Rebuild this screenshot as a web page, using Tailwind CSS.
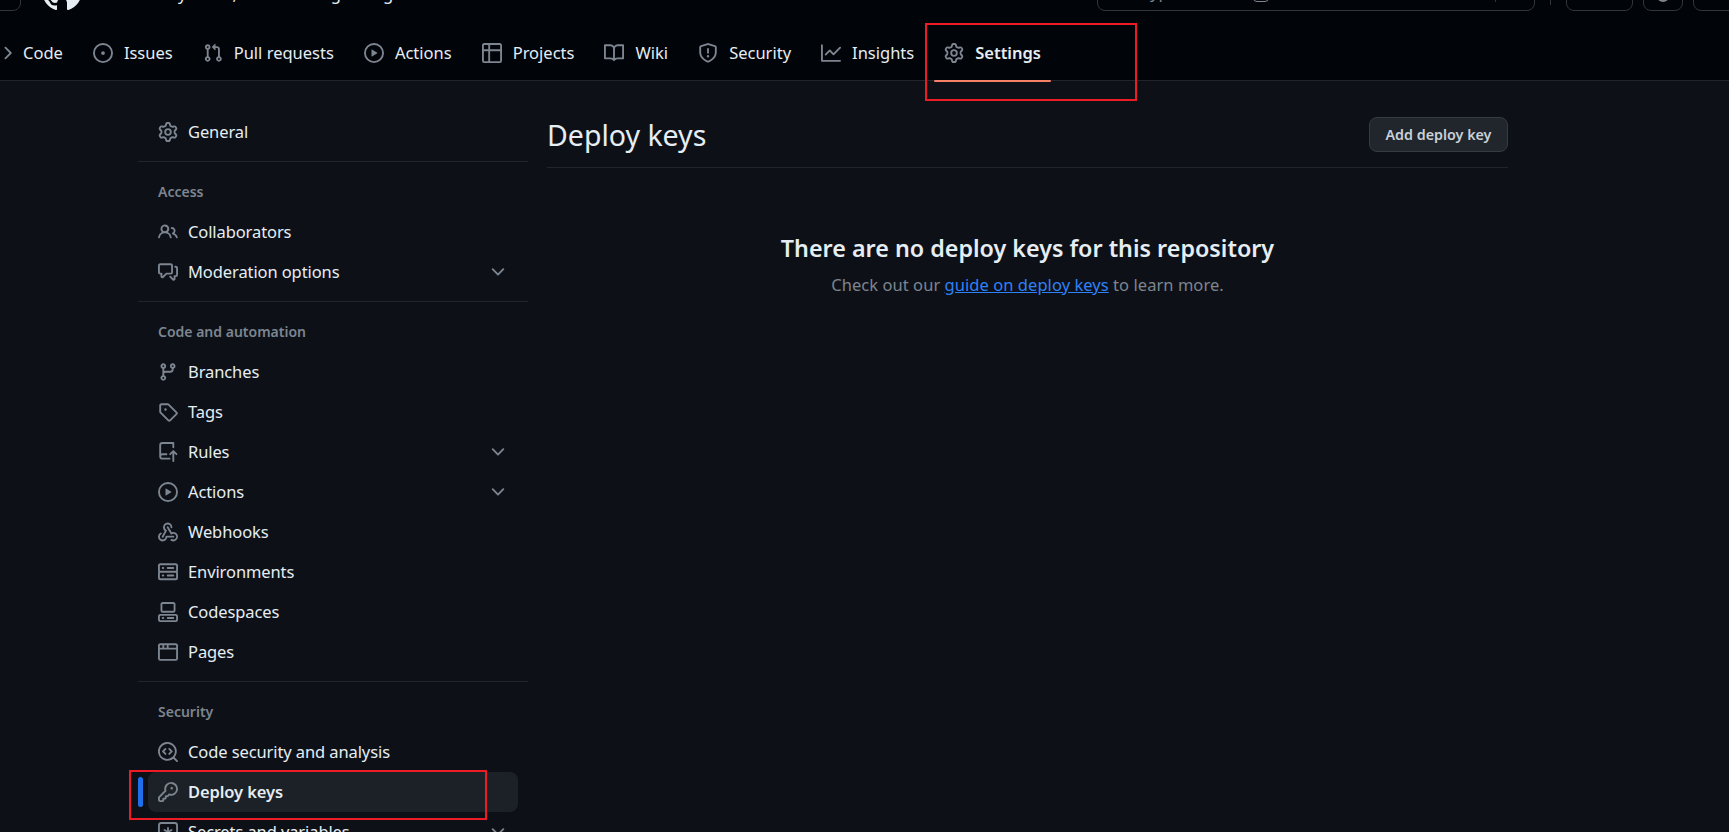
<!doctype html>
<html lang="en">
<head>
<meta charset="utf-8">
<title>Deploy keys</title>
<script src="https://cdn.jsdelivr.net/npm/@tailwindcss/browser@4"></script>
</head>
<body class="h-[832px] overflow-hidden bg-[#0d1117] font-['Noto_Sans',sans-serif] text-[16.5px] text-[#e6edf3]">

<!-- octicons -->
<svg class="hidden">
  <symbol id="i-mark" viewBox="0 0 16 16"><path d="M8 0c4.42 0 8 3.58 8 8a8.013 8.013 0 0 1-5.45 7.59c-.4.08-.55-.17-.55-.38 0-.27.01-1.13.01-2.2 0-.75-.25-1.23-.54-1.48 1.78-.2 3.65-.88 3.65-3.95 0-.88-.31-1.59-.82-2.15.08-.2.36-1.02-.08-2.12 0 0-.67-.22-2.2.82-.64-.18-1.32-.27-2-.27-.68 0-1.36.09-2 .27-1.53-1.03-2.2-.82-2.2-.82-.44 1.1-.16 1.92-.08 2.12-.51.56-.82 1.27-.82 2.15 0 3.06 1.86 3.75 3.64 3.95-.23.2-.44.55-.51 1.07-.46.21-1.61.55-2.33-.66-.15-.24-.6-.83-1.23-.82-.67.01-.27.38.01.53.34.19.73.9.82 1.13.16.45.68 1.31 2.69.94 0 .67.01 1.3.01 1.49 0 .21-.15.45-.55.38A7.995 7.995 0 0 1 0 8c0-4.42 3.58-8 8-8Z"/></symbol>
  <symbol id="i-search" viewBox="0 0 16 16"><path d="M10.68 11.74a6 6 0 0 1-7.922-8.982 6 6 0 0 1 8.982 7.922l3.04 3.04a.749.749 0 0 1-.326 1.275.749.749 0 0 1-.734-.215ZM11.5 7a4.499 4.499 0 1 0-8.997 0A4.499 4.499 0 0 0 11.5 7Z"/></symbol>
  <symbol id="i-code" viewBox="0 0 16 16"><path d="m11.28 3.22 4.25 4.25a.75.75 0 0 1 0 1.06l-4.25 4.25a.749.749 0 0 1-1.275-.326.749.749 0 0 1 .215-.734L13.94 8l-3.72-3.72a.749.749 0 0 1 .326-1.275.749.749 0 0 1 .734.215Zm-6.56 0a.751.751 0 0 1 1.042.018.751.751 0 0 1 .018 1.042L2.06 8l3.72 3.72a.749.749 0 0 1-.326 1.275.749.749 0 0 1-.734-.215L.47 8.53a.75.75 0 0 1 0-1.06Z"/></symbol>
  <symbol id="i-issue" viewBox="0 0 16 16"><path d="M8 9.5a1.5 1.5 0 1 0 0-3 1.5 1.5 0 0 0 0 3Z"/><path d="M8 0a8 8 0 1 1 0 16A8 8 0 0 1 8 0ZM1.5 8a6.5 6.5 0 1 0 13 0 6.5 6.5 0 0 0-13 0Z"/></symbol>
  <symbol id="i-pr" viewBox="0 0 16 16"><path d="M1.5 3.25a2.25 2.25 0 1 1 3 2.122v5.256a2.251 2.251 0 1 1-1.5 0V5.372A2.25 2.25 0 0 1 1.5 3.25Zm5.677-.177L9.573.677A.25.25 0 0 1 10 .854V2.5h1A2.5 2.5 0 0 1 13.5 5v5.628a2.251 2.251 0 1 1-1.5 0V5a1 1 0 0 0-1-1h-1v1.646a.25.25 0 0 1-.427.177L7.177 3.427a.25.25 0 0 1 0-.354ZM3.75 2.5a.75.75 0 1 0 0 1.5.75.75 0 0 0 0-1.5Zm0 9.5a.75.75 0 1 0 0 1.5.75.75 0 0 0 0-1.5Zm8.25.75a.75.75 0 1 0 1.5 0 .75.75 0 0 0-1.5 0Z"/></symbol>
  <symbol id="i-play" viewBox="0 0 16 16"><path d="M8 0a8 8 0 1 1 0 16A8 8 0 0 1 8 0ZM1.5 8a6.5 6.5 0 1 0 13 0 6.5 6.5 0 0 0-13 0Zm4.879-2.773 4.264 2.559a.25.25 0 0 1 0 .428l-4.264 2.559A.25.25 0 0 1 6 10.559V5.442a.25.25 0 0 1 .379-.215Z"/></symbol>
  <symbol id="i-table" viewBox="0 0 16 16"><path d="M0 1.75C0 .784.784 0 1.75 0h12.5C15.216 0 16 .784 16 1.75v12.5A1.75 1.75 0 0 1 14.25 16H1.75A1.75 1.75 0 0 1 0 14.25ZM6.5 6.5v8h7.75a.25.25 0 0 0 .25-.25V6.5Zm8-1.5V1.75a.25.25 0 0 0-.25-.25H6.5V5Zm-13 1.5v7.75c0 .138.112.25.25.25H5v-8ZM5 5V1.5H1.75a.25.25 0 0 0-.25.25V5Z"/></symbol>
  <symbol id="i-book" viewBox="0 0 16 16"><path d="M0 1.75A.75.75 0 0 1 .75 1h4.253c1.227 0 2.317.59 3 1.501A3.743 3.743 0 0 1 11.006 1h4.245a.75.75 0 0 1 .75.75v10.5a.75.75 0 0 1-.75.75h-4.507a2.25 2.25 0 0 0-1.591.659l-.622.621a.75.75 0 0 1-1.06 0l-.622-.621A2.25 2.25 0 0 0 5.258 13H.75a.75.75 0 0 1-.75-.75Zm7.251 10.324.004-5.073-.002-2.253A2.25 2.25 0 0 0 5.003 2.5H1.5v9h3.757a3.75 3.75 0 0 1 1.994.574ZM8.755 4.75l-.004 7.322a3.752 3.752 0 0 1 1.992-.572H14.5v-9h-3.495a2.25 2.25 0 0 0-2.25 2.25Z"/></symbol>
  <symbol id="i-shield" viewBox="0 0 16 16"><path d="M7.467.133a1.748 1.748 0 0 1 1.066 0l5.25 1.68A1.75 1.75 0 0 1 15 3.48V7c0 1.566-.32 3.182-1.303 4.682-.983 1.498-2.585 2.813-5.032 3.855a1.697 1.697 0 0 1-1.33 0c-2.447-1.042-4.049-2.357-5.032-3.855C1.32 10.182 1 8.566 1 7V3.48a1.75 1.75 0 0 1 1.217-1.667Zm.61 1.429a.25.25 0 0 0-.153 0l-5.25 1.68a.25.25 0 0 0-.174.238V7c0 1.358.275 2.666 1.057 3.86.784 1.194 2.121 2.34 4.366 3.297a.196.196 0 0 0 .154 0c2.245-.956 3.582-2.104 4.366-3.298C13.225 9.666 13.5 8.36 13.5 7V3.48a.251.251 0 0 0-.174-.237l-5.25-1.68ZM8.75 4.75v3a.75.75 0 0 1-1.5 0v-3a.75.75 0 0 1 1.5 0ZM9 10.5a1 1 0 1 1-2 0 1 1 0 0 1 2 0Z"/></symbol>
  <symbol id="i-graph" viewBox="0 0 16 16"><path d="M1.5 1.75V13.5h13.75a.75.75 0 0 1 0 1.5H.75a.75.75 0 0 1-.75-.75V1.75a.75.75 0 0 1 1.5 0Zm14.28 2.53-5.25 5.25a.75.75 0 0 1-1.06 0L7 7.06 4.28 9.78a.751.751 0 0 1-1.042-.018.751.751 0 0 1-.018-1.042l3.25-3.25a.75.75 0 0 1 1.06 0L10 7.94l4.72-4.72a.751.751 0 0 1 1.042.018.751.751 0 0 1 .018 1.042Z"/></symbol>
  <symbol id="i-gear" viewBox="0 0 16 16"><path d="M8 0a8.2 8.2 0 0 1 .701.031C9.444.095 9.99.645 10.16 1.29l.288 1.107c.018.066.079.158.212.224.231.114.454.243.668.386.123.082.233.09.299.071l1.103-.303c.644-.176 1.392.021 1.82.63.27.385.506.792.704 1.218.315.675.111 1.422-.364 1.891l-.814.806c-.049.048-.098.147-.088.294.016.257.016.515 0 .772-.01.147.038.246.088.294l.814.806c.475.469.679 1.216.364 1.891a7.977 7.977 0 0 1-.704 1.217c-.428.61-1.176.807-1.82.63l-1.102-.302c-.067-.019-.177-.011-.3.071a5.909 5.909 0 0 1-.668.386c-.133.066-.194.158-.211.224l-.29 1.106c-.168.646-.715 1.196-1.458 1.26a8.006 8.006 0 0 1-1.402 0c-.743-.064-1.289-.614-1.458-1.26l-.289-1.106c-.018-.066-.079-.158-.212-.224a5.738 5.738 0 0 1-.668-.386c-.123-.082-.233-.09-.299-.071l-1.103.303c-.644.176-1.392-.021-1.82-.63a8.12 8.12 0 0 1-.704-1.218c-.315-.675-.111-1.422.363-1.891l.815-.806c.05-.048.098-.147.088-.294a6.214 6.214 0 0 1 0-.772c.01-.147-.038-.246-.088-.294l-.815-.806C.635 6.045.431 5.298.746 4.623a7.92 7.92 0 0 1 .704-1.217c.428-.61 1.176-.807 1.82-.63l1.102.302c.067.019.177.011.3-.071.214-.143.437-.272.668-.386.133-.066.194-.158.211-.224l.29-1.106C6.009.645 6.556.095 7.299.03 7.53.01 7.764 0 8 0Zm-.571 1.525c-.036.003-.108.036-.137.146l-.289 1.105c-.147.561-.549.967-.998 1.189-.173.086-.34.183-.5.29-.417.278-.97.423-1.529.27l-1.103-.303c-.109-.03-.175.016-.195.045-.22.312-.412.644-.573.99-.014.031-.021.11.059.19l.815.806c.411.406.562.957.53 1.456a4.709 4.709 0 0 0 0 .582c.032.499-.119 1.05-.53 1.456l-.815.806c-.081.08-.073.159-.059.19.162.346.353.677.573.989.02.03.085.076.195.046l1.102-.303c.56-.153 1.113-.008 1.53.27.161.107.328.204.501.29.447.222.85.629.997 1.189l.289 1.105c.029.109.101.143.137.146a6.6 6.6 0 0 0 1.142 0c.036-.003.108-.036.137-.146l.289-1.105c.147-.561.549-.967.998-1.189.173-.086.34-.183.5-.29.417-.278.97-.423 1.529-.27l1.103.303c.109.029.175-.016.195-.045.22-.313.411-.644.573-.99.014-.031.021-.11-.059-.19l-.815-.806c-.411-.406-.562-.957-.53-1.456a4.709 4.709 0 0 0 0-.582c-.032-.499.119-1.05.53-1.456l.815-.806c.081-.08.073-.159.059-.19a6.464 6.464 0 0 0-.573-.989c-.02-.03-.085-.076-.195-.046l-1.102.303c-.56.153-1.113.008-1.53-.27a4.44 4.44 0 0 0-.501-.29c-.447-.222-.85-.629-.997-1.189l-.289-1.105c-.029-.11-.101-.143-.137-.146a6.6 6.6 0 0 0-1.142 0ZM11 8a3 3 0 1 1-6 0 3 3 0 0 1 6 0ZM9.5 8a1.5 1.5 0 1 0-3.001.001A1.5 1.5 0 0 0 9.5 8Z"/></symbol>
  <symbol id="i-people" viewBox="0 0 16 16"><path d="M2 5.5a3.5 3.5 0 1 1 5.898 2.549 5.508 5.508 0 0 1 3.034 4.084.75.75 0 1 1-1.482.235 4 4 0 0 0-7.9 0 .75.75 0 0 1-1.482-.236A5.507 5.507 0 0 1 3.102 8.05 3.493 3.493 0 0 1 2 5.5ZM11 4a3.001 3.001 0 0 1 2.22 5.018 5.01 5.01 0 0 1 2.56 3.012.749.749 0 0 1-.885.954.752.752 0 0 1-.549-.514 3.507 3.507 0 0 0-2.522-2.372.75.75 0 0 1-.574-.73v-.352a.75.75 0 0 1 .416-.672A1.5 1.5 0 0 0 11 5.5.75.75 0 0 1 11 4Zm-5.5-.5a2 2 0 1 0-.001 3.999A2 2 0 0 0 5.5 3.5Z"/></symbol>
  <symbol id="i-comments" viewBox="0 0 16 16"><path d="M1.75 1h8.5c.966 0 1.75.784 1.75 1.75v5.5A1.75 1.75 0 0 1 10.25 10H7.061l-2.574 2.573A1.458 1.458 0 0 1 2 11.543V10h-.25A1.75 1.75 0 0 1 0 8.25v-5.5C0 1.784.784 1 1.75 1ZM1.5 2.75v5.5c0 .138.112.25.25.25h1a.75.75 0 0 1 .75.75v2.19l2.72-2.72a.749.749 0 0 1 .53-.22h3.5a.25.25 0 0 0 .25-.25v-5.5a.25.25 0 0 0-.25-.25h-8.5a.25.25 0 0 0-.25.25Zm13 2a.25.25 0 0 0-.25-.25h-.5a.75.75 0 0 1 0-1.5h.5c.966 0 1.75.784 1.75 1.75v5.5A1.75 1.75 0 0 1 14.25 12H14v1.543a1.458 1.458 0 0 1-2.487 1.03L9.22 12.28a.749.749 0 0 1 .326-1.275.749.749 0 0 1 .734.215l2.22 2.22v-2.19a.75.75 0 0 1 .75-.75h1a.25.25 0 0 0 .25-.25Z"/></symbol>
  <symbol id="i-branch" viewBox="0 0 16 16"><path d="M9.5 3.25a2.25 2.25 0 1 1 3 2.122V6A2.5 2.5 0 0 1 10 8.5H6a1 1 0 0 0-1 1v1.128a2.251 2.251 0 1 1-1.5 0V5.372a2.25 2.25 0 1 1 1.5 0v1.836A2.493 2.493 0 0 1 6 7h4a1 1 0 0 0 1-1v-.628A2.25 2.25 0 0 1 9.5 3.25Zm-6 0a.75.75 0 1 0 1.5 0 .75.75 0 0 0-1.5 0Zm8.25-.75a.75.75 0 1 0 0 1.5.75.75 0 0 0 0-1.5ZM4.25 12a.75.75 0 1 0 0 1.5.75.75 0 0 0 0-1.5Z"/></symbol>
  <symbol id="i-tag" viewBox="0 0 16 16"><path d="M1 7.775V2.75C1 1.784 1.784 1 2.75 1h5.025c.464 0 .91.184 1.238.513l6.25 6.25a1.75 1.75 0 0 1 0 2.474l-5.026 5.026a1.75 1.75 0 0 1-2.474 0l-6.25-6.25A1.752 1.752 0 0 1 1 7.775Zm1.5 0c0 .066.026.13.073.177l6.25 6.25a.25.25 0 0 0 .354 0l5.025-5.025a.25.25 0 0 0 0-.354l-6.25-6.25a.25.25 0 0 0-.177-.073H2.75a.25.25 0 0 0-.25.25ZM6 5a1 1 0 1 1 0 2 1 1 0 0 1 0-2Z"/></symbol>
  <symbol id="i-push" viewBox="0 0 16 16"><path d="M1 2.5A2.5 2.5 0 0 1 3.5 0h8.75a.75.75 0 0 1 .75.75v3.5a.75.75 0 0 1-1.5 0V1.5h-8a1 1 0 0 0-1 1v6.708A2.493 2.493 0 0 1 3.5 9h3.25a.75.75 0 0 1 0 1.5H3.5a1 1 0 0 0 0 2h5.75a.75.75 0 0 1 0 1.5H3.5A2.5 2.5 0 0 1 1 11.5Zm13.23 7.79h-.001l-1.224-1.224v6.184a.75.75 0 0 1-1.5 0V9.066L10.28 10.29a.75.75 0 0 1-1.06-1.061l2.505-2.504a.75.75 0 0 1 1.06 0L15.29 9.23a.751.751 0 0 1-.018 1.042.751.751 0 0 1-1.042.018Z"/></symbol>
  <symbol id="i-webhook" viewBox="0 0 16 16"><path d="M5.5 4.25a2.25 2.25 0 0 1 4.5 0 .75.75 0 0 0 1.5 0 3.75 3.75 0 1 0-6.14 2.889l-2.272 4.258a.75.75 0 0 0 1.324.706L7 7.25a.75.75 0 0 0-.309-1.015A2.25 2.25 0 0 1 5.5 4.25Z"/><path d="M7.364 3.607a.75.75 0 0 1 1.03.257l2.608 4.349a3.75 3.75 0 1 1-.628 6.785.75.75 0 0 1 .752-1.299 2.25 2.25 0 1 0-.033-3.88.75.75 0 0 1-1.03-.256L7.107 4.636a.75.75 0 0 1 .257-1.03Z"/><path d="M2.9 8.776A.75.75 0 0 1 2.625 9.8 2.25 2.25 0 1 0 6 11.75a.75.75 0 0 1 .75-.751h5.5a.75.75 0 0 1 0 1.5H7.425a3.751 3.751 0 1 1-5.55-3.998.75.75 0 0 1 1.024.274Z"/></symbol>
  <symbol id="i-server" viewBox="0 0 16 16"><path d="M1.75 1h12.5c.966 0 1.75.784 1.75 1.75v4c0 .372-.116.717-.314 1 .198.283.314.628.314 1v4a1.75 1.75 0 0 1-1.75 1.75H1.75A1.75 1.75 0 0 1 0 12.75v-4c0-.358.109-.707.314-1a1.739 1.739 0 0 1-.314-1v-4C0 1.784.784 1 1.75 1ZM1.5 2.75v4c0 .138.112.25.25.25h12.5a.25.25 0 0 0 .25-.25v-4a.25.25 0 0 0-.25-.25H1.75a.25.25 0 0 0-.25.25Zm.25 5.75a.25.25 0 0 0-.25.25v4c0 .138.112.25.25.25h12.5a.25.25 0 0 0 .25-.25v-4a.25.25 0 0 0-.25-.25ZM7 4.75A.75.75 0 0 1 7.75 4h4.5a.75.75 0 0 1 0 1.5h-4.5A.75.75 0 0 1 7 4.75ZM7.75 10h4.5a.75.75 0 0 1 0 1.5h-4.5a.75.75 0 0 1 0-1.5ZM3 4.75A.75.75 0 0 1 3.75 4h.5a.75.75 0 0 1 0 1.5h-.5A.75.75 0 0 1 3 4.75ZM3.75 10h.5a.75.75 0 0 1 0 1.5h-.5a.75.75 0 0 1 0-1.5Z"/></symbol>
  <symbol id="i-codespaces" viewBox="0 0 16 16"><path d="M0 11.25c0-.966.784-1.75 1.75-1.75h12.5c.966 0 1.75.784 1.75 1.75v3A1.75 1.75 0 0 1 14.25 16H1.75A1.75 1.75 0 0 1 0 14.25Zm2-9.5C2 .784 2.784 0 3.75 0h8.5C13.216 0 14 .784 14 1.75v5a1.75 1.75 0 0 1-1.75 1.75h-8.5A1.75 1.75 0 0 1 2 6.75Zm1.75-.25a.25.25 0 0 0-.25.25v5c0 .138.112.25.25.25h8.5a.25.25 0 0 0 .25-.25v-5a.25.25 0 0 0-.25-.25Zm-2 9.5a.25.25 0 0 0-.25.25v3c0 .138.112.25.25.25h12.5a.25.25 0 0 0 .25-.25v-3a.25.25 0 0 0-.25-.25Z"/><path d="M7 12.75a.75.75 0 0 1 .75-.75h4.5a.75.75 0 0 1 0 1.5h-4.5a.75.75 0 0 1-.75-.75Zm-4 0a.75.75 0 0 1 .75-.75h.5a.75.75 0 0 1 0 1.5h-.5a.75.75 0 0 1-.75-.75Z"/></symbol>
  <symbol id="i-browser" viewBox="0 0 16 16"><path d="M0 2.75C0 1.784.784 1 1.75 1h12.5c.966 0 1.75.784 1.75 1.75v10.5A1.75 1.75 0 0 1 14.25 15H1.75A1.75 1.75 0 0 1 0 13.25ZM14.5 6h-13v7.25c0 .138.112.25.25.25h12.5a.25.25 0 0 0 .25-.25Zm-6-3.5v2h6V2.75a.25.25 0 0 0-.25-.25ZM5 2.5v2h2v-2Zm-3.25 0a.25.25 0 0 0-.25.25V4.5h2v-2Z"/></symbol>
  <symbol id="i-codescan" viewBox="0 0 16 16"><path d="M8.47 4.97a.75.75 0 0 0 0 1.06L9.94 7.5 8.47 8.97a.75.75 0 1 0 1.06 1.06l2-2a.75.75 0 0 0 0-1.06l-2-2a.75.75 0 0 0-1.06 0ZM6.53 6.03a.75.75 0 0 0-1.06-1.06l-2 2a.75.75 0 0 0 0 1.06l2 2a.75.75 0 1 0 1.06-1.06L5.06 7.5l1.47-1.47Z"/><path d="M12.246 13.307a7.501 7.501 0 1 1 1.06-1.06l2.474 2.473a.749.749 0 0 1-.326 1.275.749.749 0 0 1-.734-.215ZM1.5 7.5a6.002 6.002 0 0 0 3.608 5.504 6.002 6.002 0 0 0 6.486-1.117.748.748 0 0 1 .292-.293A6 6 0 1 0 1.5 7.5Z"/></symbol>
  <symbol id="i-key" viewBox="0 0 16 16"><path d="M10.5 0a5.499 5.499 0 1 1-1.288 10.848l-.932.932a.749.749 0 0 1-.53.22H7v.75a.749.749 0 0 1-.22.53l-.5.5a.749.749 0 0 1-.53.22H5v.75a.749.749 0 0 1-.22.53l-.5.5a.749.749 0 0 1-.53.22h-2A1.75 1.75 0 0 1 0 14.25v-2c0-.199.079-.389.22-.53l4.932-4.932A5.5 5.5 0 0 1 10.5 0Zm-4 5.5c-.001.431.069.86.205 1.269a.75.75 0 0 1-.181.768L1.5 12.56v1.69c0 .138.112.25.25.25h1.69l.06-.06v-1.19a.75.75 0 0 1 .75-.75h1.19l.06-.06v-1.19a.75.75 0 0 1 .75-.75h1.19l1.023-1.025a.75.75 0 0 1 .768-.18A4 4 0 1 0 6.5 5.5ZM11 6a1 1 0 1 1 0-2 1 1 0 0 1 0 2Z"/></symbol>
  <symbol id="i-asterisk" viewBox="0 0 16 16"><path d="M0 2.75A2.75 2.75 0 0 1 2.75 0h10.5A2.75 2.75 0 0 1 16 2.75v10.5A2.75 2.75 0 0 1 13.25 16H2.75A2.75 2.75 0 0 1 0 13.25ZM2.75 1.5c-.69 0-1.25.56-1.25 1.25v10.5c0 .69.56 1.25 1.25 1.25h10.5c.69 0 1.25-.56 1.25-1.25V2.75c0-.69-.56-1.25-1.25-1.25Z"/><path d="M8 4a.75.75 0 0 1 .75.75V6.7l1.69-.975a.75.75 0 0 1 .75 1.3L9.5 8l1.69.976a.75.75 0 0 1-.75 1.298L8.75 9.3v1.951a.75.75 0 0 1-1.5 0V9.299l-1.69.976a.75.75 0 0 1-.75-1.3L6.5 8l-1.69-.975a.75.75 0 0 1 .75-1.3l1.69.976V4.75A.75.75 0 0 1 8 4Z"/></symbol>
  <symbol id="i-chevron" viewBox="0 0 16 16"><path d="M12.78 5.22a.749.749 0 0 1 0 1.06l-4.25 4.25a.749.749 0 0 1-1.06 0L3.22 6.28a.749.749 0 1 1 1.06-1.06L8 8.939l3.72-3.719a.749.749 0 0 1 1.06 0Z"/></symbol>
</svg>

<header class="bg-[#010409]">
  <!-- the top bar, cut off by the screenshot -->
  <div class="flex h-[11px] items-end overflow-hidden">
    <div class="-ml-[20px] h-[40px] w-[41px] shrink-0 rounded-lg border border-[#30363d]"></div>
    <svg class="ml-[21px] size-[40px] shrink-0 fill-[#e6edf3]"><use href="#i-mark"/></svg>
    <span class="mb-[7px] ml-[96px] leading-[20px]">y</span>
    <span class="mb-[7px] ml-[46px] leading-[20px]">,</span>
    <span class="mb-[7px] ml-[94px] leading-[20px]">g</span>
    <span class="mb-[7px] ml-[42px] leading-[20px]">g</span>
    <div class="ml-[704px] flex h-[40px] w-[438px] shrink-0 items-end rounded-lg border border-[#30363d]">
      <svg class="mb-[9px] ml-[10px] size-[20px] shrink-0 fill-[#7d8590]"><use href="#i-search"/></svg>
      <span class="mb-[8px] ml-[13px] leading-[20px] text-[#7d8590]">Type</span>
      <span class="mb-[8px] ml-[75px] h-[20px] w-[16px] shrink-0 rounded-[4px] border border-[#7d8590]"></span>
      <span class="mb-[8px] ml-[226px] h-[20px] w-px shrink-0 bg-[#30363d]"></span>
    </div>
    <div class="ml-[15px] mb-[6px] h-[24px] w-px shrink-0 bg-[#30363d]"></div>
    <div class="ml-[15px] h-[40px] w-[67px] shrink-0 rounded-lg border border-[#30363d]"></div>
    <div class="ml-[10px] flex h-[40px] w-[40px] shrink-0 items-end justify-center rounded-lg border border-[#30363d]">
      <span class="mb-[8px] h-[14px] w-[12px] rounded-full bg-[#7d8590]"></span>
    </div>
    <div class="ml-[10px] h-[40px] w-[60px] shrink-0 rounded-lg border border-[#30363d]"></div>
  </div>

  <nav class="flex h-[70px] items-start border-b border-[#21262d] pt-[22px]">
    <a class="-ml-[18px] flex h-[40px] items-center gap-[11px] px-[10px]"><svg class="size-[20px] shrink-0 fill-[#7d8590]"><use href="#i-code"/></svg>Code</a>
    <a class="ml-[10px] flex h-[40px] items-center gap-[11px] px-[10px]"><svg class="size-[20px] shrink-0 fill-[#7d8590]"><use href="#i-issue"/></svg>Issues</a>
    <a class="ml-[10px] flex h-[40px] items-center gap-[11px] px-[10px]"><svg class="size-[20px] shrink-0 fill-[#7d8590]"><use href="#i-pr"/></svg>Pull requests</a>
    <a class="ml-[10px] flex h-[40px] items-center gap-[11px] px-[10px]"><svg class="size-[20px] shrink-0 fill-[#7d8590]"><use href="#i-play"/></svg>Actions</a>
    <a class="ml-[10px] flex h-[40px] items-center gap-[11px] px-[10px]"><svg class="size-[20px] shrink-0 fill-[#7d8590]"><use href="#i-table"/></svg>Projects</a>
    <a class="ml-[10px] flex h-[40px] items-center gap-[11px] px-[10px]"><svg class="size-[20px] shrink-0 fill-[#7d8590]"><use href="#i-book"/></svg>Wiki</a>
    <a class="ml-[10px] flex h-[40px] items-center gap-[11px] px-[10px]"><svg class="size-[20px] shrink-0 fill-[#7d8590]"><use href="#i-shield"/></svg>Security</a>
    <a class="ml-[10px] flex h-[40px] items-center gap-[11px] px-[10px]"><svg class="size-[20px] shrink-0 fill-[#7d8590]"><use href="#i-graph"/></svg>Insights</a>
    <a class="relative ml-[10px] flex h-[40px] items-center gap-[11px] px-[10px] font-semibold"><svg class="size-[20px] shrink-0 fill-[#7d8590]"><use href="#i-gear"/></svg>Settings
      <span class="absolute right-0 -bottom-[9px] left-0 h-[2px] rounded-sm bg-[#f78166]"></span>
    </a>
  </nav>
</header>

<div class="flex gap-[19px] pt-[31px] pl-[138px]">
  <!-- settings sidebar -->
  <aside class="w-[390px] shrink-0 tracking-[-0.1px]">
    <div class="pl-[10px] pr-[10px]">
      <a class="flex h-[40px] items-center gap-[10px] px-[10px]"><svg class="size-[20px] shrink-0 fill-[#7d8590]"><use href="#i-gear"/></svg>General</a>
    </div>
    <div class="mt-[9px] border-t border-[#21262d]"></div>
    <div class="flex h-[50px] items-end pb-[10px] pl-[20px] text-[14px] leading-[20px] font-semibold tracking-normal text-[#7d8590]">Access</div>
    <div class="px-[10px]">
      <a class="flex h-[40px] items-center gap-[10px] px-[10px]"><svg class="size-[20px] shrink-0 fill-[#7d8590]"><use href="#i-people"/></svg>Collaborators</a>
      <a class="flex h-[40px] items-center gap-[10px] px-[10px]"><svg class="size-[20px] shrink-0 fill-[#7d8590]"><use href="#i-comments"/></svg>Moderation options<svg class="ml-auto size-[20px] shrink-0 fill-[#7d8590]"><use href="#i-chevron"/></svg></a>
    </div>
    <div class="mt-[9px] border-t border-[#21262d]"></div>
    <div class="flex h-[50px] items-end pb-[10px] pl-[20px] text-[14px] leading-[20px] font-semibold tracking-normal text-[#7d8590]">Code and automation</div>
    <div class="px-[10px]">
      <a class="flex h-[40px] items-center gap-[10px] px-[10px]"><svg class="size-[20px] shrink-0 fill-[#7d8590]"><use href="#i-branch"/></svg>Branches</a>
      <a class="flex h-[40px] items-center gap-[10px] px-[10px]"><svg class="size-[20px] shrink-0 fill-[#7d8590]"><use href="#i-tag"/></svg>Tags</a>
      <a class="flex h-[40px] items-center gap-[10px] px-[10px]"><svg class="size-[20px] shrink-0 fill-[#7d8590]"><use href="#i-push"/></svg>Rules<svg class="ml-auto size-[20px] shrink-0 fill-[#7d8590]"><use href="#i-chevron"/></svg></a>
      <a class="flex h-[40px] items-center gap-[10px] px-[10px]"><svg class="size-[20px] shrink-0 fill-[#7d8590]"><use href="#i-play"/></svg>Actions<svg class="ml-auto size-[20px] shrink-0 fill-[#7d8590]"><use href="#i-chevron"/></svg></a>
      <a class="flex h-[40px] items-center gap-[10px] px-[10px]"><svg class="size-[20px] shrink-0 fill-[#7d8590]"><use href="#i-webhook"/></svg>Webhooks</a>
      <a class="flex h-[40px] items-center gap-[10px] px-[10px]"><svg class="size-[20px] shrink-0 fill-[#7d8590]"><use href="#i-server"/></svg>Environments</a>
      <a class="flex h-[40px] items-center gap-[10px] px-[10px]"><svg class="size-[20px] shrink-0 fill-[#7d8590]"><use href="#i-codespaces"/></svg>Codespaces</a>
      <a class="flex h-[40px] items-center gap-[10px] px-[10px]"><svg class="size-[20px] shrink-0 fill-[#7d8590]"><use href="#i-browser"/></svg>Pages</a>
    </div>
    <div class="mt-[9px] border-t border-[#21262d]"></div>
    <div class="flex h-[50px] items-end pb-[10px] pl-[20px] text-[14px] leading-[20px] font-semibold tracking-normal text-[#7d8590]">Security</div>
    <div class="px-[10px]">
      <a class="flex h-[40px] items-center gap-[10px] px-[10px]"><svg class="size-[20px] shrink-0 fill-[#7d8590]"><use href="#i-codescan"/></svg>Code security and analysis</a>
      <a class="relative flex h-[40px] items-center gap-[10px] rounded-lg bg-[#1c2127] px-[10px] font-semibold"><span class="absolute top-[5px] -left-[10px] h-[30px] w-[5px] rounded-md bg-[#1f6feb]"></span><svg class="size-[20px] shrink-0 fill-[#7d8590]"><use href="#i-key"/></svg>Deploy keys</a>
      <a class="flex h-[40px] items-center gap-[10px] px-[10px]"><svg class="size-[20px] shrink-0 fill-[#7d8590]"><use href="#i-asterisk"/></svg>Secrets and variables<svg class="ml-auto size-[20px] shrink-0 fill-[#7d8590]"><use href="#i-chevron"/></svg></a>
    </div>
  </aside>

  <!-- deploy keys -->
  <main class="w-[961px] shrink-0">
    <div class="flex h-[56px] items-start justify-between border-b border-[#21262d] pt-[5px]">
      <h1 class="-mt-[4px] text-[28.5px] leading-[44px] font-normal">Deploy keys</h1>
      <button class="h-[35px] w-[139px] rounded-lg border border-[#363b42] bg-[#21262d] text-[14.3px] font-semibold text-[#c9d1d9]">Add deploy key</button>
    </div>
    <div class="pt-[64px] text-center">
      <h3 class="text-[23.3px] leading-[32px] font-semibold">There are no deploy keys for this repository</h3>
      <p class="mt-[8px] leading-[26px] tracking-[0.05px] text-[#7d8590]">Check out our <a class="text-[#2f81f7] underline">guide on deploy keys</a> to learn more.</p>
    </div>
  </main>
</div>

<!-- red annotation boxes drawn on the screenshot -->
<div class="absolute top-[23px] left-[925px] h-[78px] w-[212px] border-2 border-[#ed1c24]"></div>
<div class="absolute top-[770px] left-[129px] h-[50px] w-[358px] border-2 border-[#ed1c24]"></div>
</body>
</html>
